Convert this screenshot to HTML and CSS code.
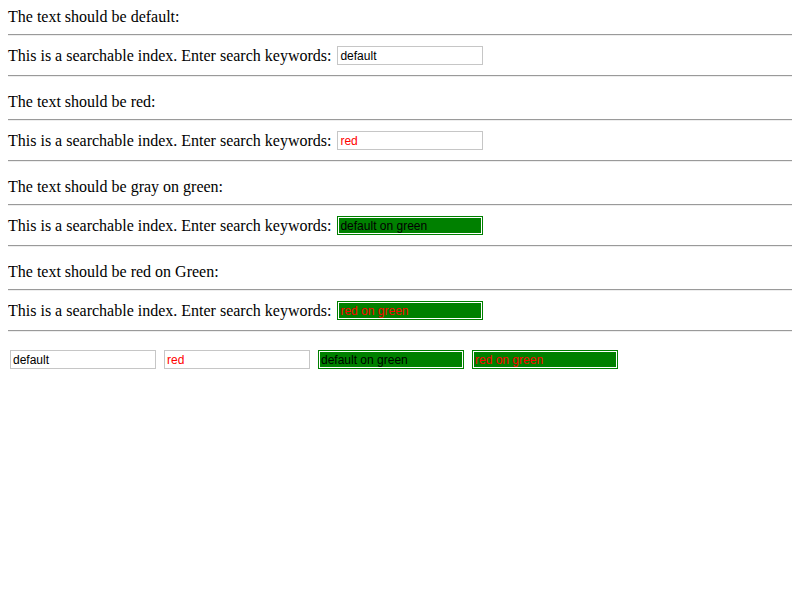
FILE: index.html
```html
<!DOCTYPE html>
<html>
<head>
<meta charset="utf-8">
<link rel="stylesheet" href="styles.css">
</head>
<body>
<section class="block">
  <div class="title">The text should be default:</div>
  <hr class="rule">
  <div class="row"><span>This is a searchable index. Enter search keywords:</span><input class="field" type="text" value="default"></div>
  <hr class="rule">
</section>
<section class="block">
  <div class="title">The text should be red:</div>
  <hr class="rule">
  <div class="row"><span>This is a searchable index. Enter search keywords:</span><input class="field red" type="text" value="red"></div>
  <hr class="rule">
</section>
<section class="block">
  <div class="title">The text should be gray on green:</div>
  <hr class="rule">
  <div class="row"><span>This is a searchable index. Enter search keywords:</span><input class="field green" type="text" value="default on green"></div>
  <hr class="rule">
</section>
<section class="block">
  <div class="title">The text should be red on Green:</div>
  <hr class="rule">
  <div class="row"><span>This is a searchable index. Enter search keywords:</span><input class="field green red" type="text" value="red on green"></div>
  <hr class="rule">
</section>
<div class="bottom">
  <input class="field" type="text" value="default">
  <input class="field red" type="text" value="red">
  <input class="field green" type="text" value="default on green">
  <input class="field green red" type="text" value="red on green">
</div>
</body>
</html>
```
FILE: styles.css
```css
html, body {
  background: #fff;
}
body {
  margin: 8px;
  font-family: "Liberation Serif", "Times New Roman", serif;
  font-size: 16px;
  color: #000;
}
.block {
  padding-bottom: 8px;
}
.title {
  height: 18px;
  line-height: 18px;
}
.rule {
  margin: 8px 0;
  height: 0;
  border: 0;
  border-top: 1px solid #9a9a9a;
  border-bottom: 1px solid #eeeeee;
}
.row {
  display: flex;
  align-items: center;
  gap: 4px;
  height: 23px;
  line-height: 18px;
}
.field {
  box-sizing: border-box;
  width: 146px;
  height: 19px;
  margin: 2px;
  padding: 1px 2px 0;
  border: 1px solid #c6c6c6;
  background: #fff;
  font-family: "Liberation Sans", Arial, sans-serif;
  font-size: 12px;
  color: #000;
  outline: none;
}
.red {
  color: #ff0000;
}
.green {
  background: #008000;
  border-color: #008000;
  box-shadow: inset 0 0 0 1px #ffffff;
}
.bottom {
  display: flex;
  gap: 4px;
}
```
